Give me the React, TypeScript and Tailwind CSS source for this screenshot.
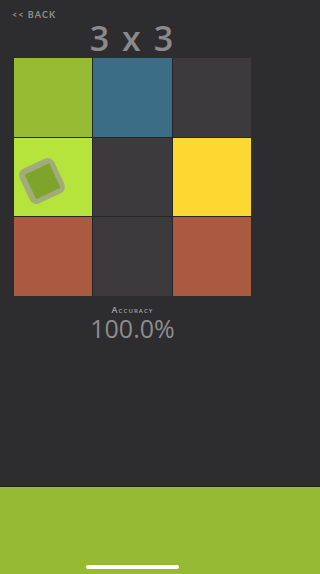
import React from "react";

const cells = [
  "bg-[#98bb34]",
  "bg-[#3b6e86]",
  "bg-[#3c3a3d]",
  "bg-[#b6e43d]",
  "bg-[#3c3a3d]",
  "bg-[#fdd830]",
  "bg-[#a95a40]",
  "bg-[#3c3a3d]",
  "bg-[#a95a40]",
];

export default function App() {
  return (
    <div className="w-full min-w-[265px] h-[574px] bg-[#2d2c2e] flex flex-col overflow-hidden" style={{ fontFamily: "Lato, 'Open Sans', sans-serif" }}>
      <div className="flex-1 flex flex-col w-[265px]">
        <div className="pl-[12px] pt-[10px] h-[21px] text-[9px] leading-[10px] tracking-[0.12em] text-[#8f8f8f] font-bold">
          &lt;&lt; BACK
        </div>
        <div className="h-[37px] flex justify-center items-start text-[34px] leading-[34px] font-semibold text-[#8a8a8a] tracking-[0.06em]" style={{ fontFamily: "'Open Sans', sans-serif" }}>
          3 x 3
        </div>
        <div className="ml-[14px] w-[237px] grid grid-cols-3 gap-px bg-[#262527]">
          {cells.map((c, i) => (
            <div key={i} className={`${c} h-[78.5px] relative`}>
              {i === 3 && (
                <div className="absolute left-[9px] top-[24px] w-[38px] h-[38px] rounded-[7px] bg-[#a2ab7c] rotate-[-25deg] flex items-center justify-center">
                  <div className="w-[27px] h-[27px] bg-[#7fa42b]" />
                </div>
              )}
            </div>
          ))}
        </div>
        <div className="mt-[9px] flex flex-col items-center text-[#8d8d8d]">
          <div className="text-[9px] leading-[10px] tracking-[0.12em] text-[#a2a2a2] font-semibold [font-variant:small-caps]" style={{ fontFamily: "'Open Sans', sans-serif" }}>
            Accuracy
          </div>
          <div className="mt-[1px] text-[25px] leading-[25px] font-medium" style={{ fontFamily: "'Open Sans', sans-serif" }}>
            100.0%
          </div>
        </div>
      </div>
      <div className="h-px bg-[#232323]" />
      <div className="h-[87px] bg-[#97ba35] w-full">
        <div className="w-[265px] h-full flex flex-col justify-end items-center pb-[5px]">
          <div className="w-[93px] h-[4px] rounded-full bg-white" />
        </div>
      </div>
    </div>
  );
}
